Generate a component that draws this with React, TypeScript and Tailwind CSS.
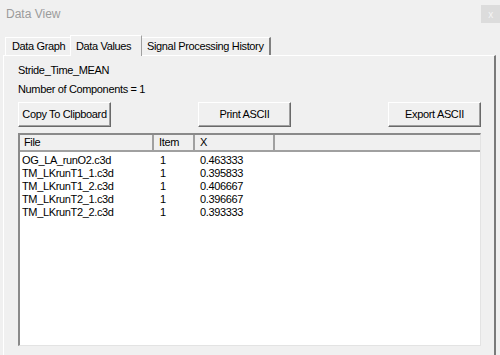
import React from "react";

const rows = [
  ["OG_LA_runO2.c3d", "1", "0.463333"],
  ["TM_LKrunT1_1.c3d", "1", "0.395833"],
  ["TM_LKrunT1_2.c3d", "1", "0.406667"],
  ["TM_LKrunT2_1.c3d", "1", "0.396667"],
  ["TM_LKrunT2_2.c3d", "1", "0.393333"],
];

function Btn({ label, className = "" }: { label: string; className?: string }) {
  return (
    <div
      className={
        "w-[93px] h-[25px] flex items-center justify-center whitespace-nowrap bg-[#f0f0f0] border border-t-white border-l-white border-r-[#696969] border-b-[#696969] shadow-[inset_-1px_-1px_0_#a0a0a0] " +
        className
      }
    >
      {label}
    </div>
  );
}

export default function App() {
  return (
    <div
      className="w-[500px] h-[355px] bg-[#f0f0f0] overflow-hidden flex flex-col text-[11px] leading-[13px] tracking-[-0.35px] text-black whitespace-nowrap"
      style={{ fontFamily: '"Liberation Sans", Arial, sans-serif' }}
    >
      <div className="h-[35px] flex items-start justify-between shrink-0">
        <div className="pl-[6px] pt-[7px] text-[12px] leading-[14px] tracking-normal text-[#9b9b9b]">Data View</div>
        <div className="mt-[5px] w-[19px] h-[18px] bg-[#dcdcdc] flex items-center justify-center text-[10px] text-[#f4f4f4]">
          x
        </div>
      </div>
      <div className="h-[20px] flex items-end pl-[5px] shrink-0 relative z-10">
        <div className="h-[18px] w-[65px] pl-[6px] flex items-center border-t border-l border-white bg-[#f0f0f0]">
          Data Graph
        </div>
        <div className="h-[21px] -mb-[1px] w-[72px] pl-[5px] flex items-center border-t border-l border-r border-t-white border-l-white border-r-[#a0a0a0] bg-[#f0f0f0]">
          Data Values
        </div>
        <div className="h-[18px] w-[129px] pl-[5px] flex items-center border-t border-t-white border-r-2 border-r-[#808080] bg-[#f0f0f0]">
          Signal Processing History
        </div>
      </div>
      <div className="ml-[3px] w-[493px] flex-1 border-t border-l border-white border-r-2 border-r-[#7a7a7a] pl-[14px] pt-[5px] flex flex-col">
        <div className="h-[19px] flex items-center">Stride_Time_MEAN</div>
        <div className="h-[19px] flex items-center">Number of Components = 1</div>
        <div className="mt-[3px] flex w-[463px]">
          <Btn label="Copy To Clipboard" />
          <Btn label="Print ASCII" className="ml-[87px]" />
          <Btn label="Export ASCII" className="ml-auto" />
        </div>
        <div className="mt-[6px] w-[463px] h-[213px] bg-white border-t-2 border-l-2 border-t-[#8a8a8a] border-l-[#8a8a8a] border-r border-b border-r-[#e3e3e3] border-b-[#e3e3e3] flex flex-col">
          <div className="h-[17px] flex bg-[#f0f0f0] border-b-2 border-b-[#a0a0a0] shrink-0">
            <div className="w-[134px] pl-[4px] flex items-center border-r-2 border-r-[#a0a0a0]">File</div>
            <div className="w-[41px] pl-[5px] flex items-center border-r-2 border-r-[#a0a0a0]">Item</div>
            <div className="w-[80px] pl-[5px] flex items-center border-r-2 border-r-[#a0a0a0]">X</div>
            <div className="flex-1" />
          </div>
          <div className="pt-[2px] flex flex-col">
            {rows.map((r) => (
              <div key={r[0]} className="h-[13px] flex items-center">
                <div className="w-[134px] pl-[2px]">{r[0]}</div>
                <div className="w-[41px] pl-[6px]">{r[1]}</div>
                <div className="w-[80px] pl-[5px]">{r[2]}</div>
              </div>
            ))}
          </div>
        </div>
      </div>
    </div>
  );
}
